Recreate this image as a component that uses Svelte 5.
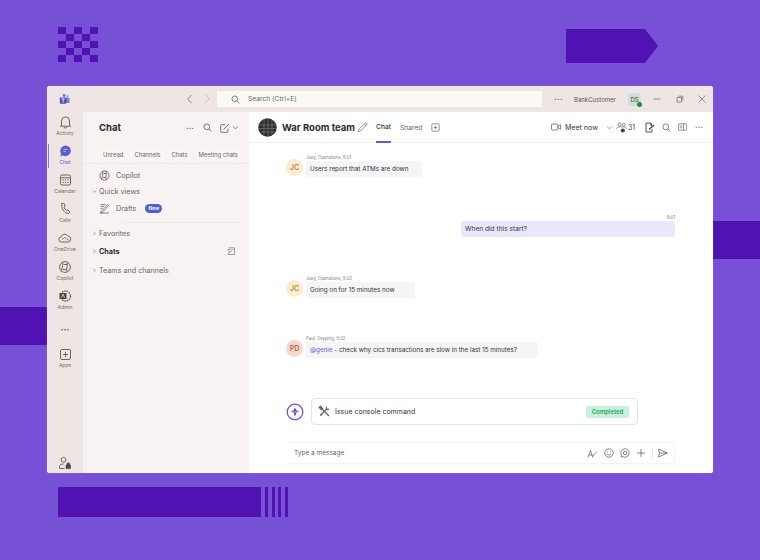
<script>
  const checker = Array.from({ length: 25 }, (_, i) => i % 2 === 0);
  const stripes = [0, 1, 2, 3];
  const filters = ['Unread', 'Channels', 'Chats', 'Meeting chats'];
</script>

<div class="page">
  <div class="checker">
    {#each checker as on}<span class:on></span>{/each}
  </div>
  <div class="arrow"></div>
  <div class="band right"></div>
  <div class="band left"></div>
  <div class="barcode">
    <div class="bar"></div>
    {#each stripes as s}<span data-s={s}></span>{/each}
  </div>

  <div class="window">
    <header class="titlebar">
      <div class="logo">
        <svg width="11" height="12" viewBox="0 0 14 14"><circle cx="6.500" cy="2.500" r="1.800" fill="#6b70cf"/><circle cx="11" cy="3.500" r="1.400" fill="#8b8fe0"/><rect x="8" y="5.500" width="5.500" height="6.500" rx="1" fill="#7b80d8"/><rect x="1" y="5" width="8.500" height="8" rx="1" fill="#4b53bc"/><path d="M3.300 7h4M5.300 7v4.500" stroke="#fff" stroke-width="1"/></svg>
      </div>
      <div class="nav">
        <svg width="8" height="10" viewBox="0 0 8 10"><path d="M5.500 1 1.800 5l3.700 4" fill="none" stroke="#8c8585" stroke-width="1"/></svg>
        <svg width="8" height="10" viewBox="0 0 8 10"><path d="M2.500 1l3.700 4-3.700 4" fill="none" stroke="#c8c0c0" stroke-width="1"/></svg>
      </div>
      <div class="searchbox">
        <svg width="9" height="9" viewBox="0 0 9 9"><circle cx="3.800" cy="3.800" r="2.800" fill="none" stroke="#666" stroke-width=".8"/><path d="M6 6l2.400 2.400" stroke="#666" stroke-width=".8"/></svg>
        <span>Search (Ctrl+E)</span>
      </div>
      <span class="tdots">···</span>
      <span class="account">BankCustomer</span>
      <div class="ds">DS<i></i></div>
      <div class="winbtns">
        <svg width="10" height="10" viewBox="0 0 10 10"><path d="M1.500 5h7" stroke="#777" stroke-width=".8"/></svg>
        <svg width="10" height="10" viewBox="0 0 10 10"><path d="M3.500 2.200h4.300v4.300M2 3.500h4.500V8H2z" fill="none" stroke="#777" stroke-width=".8"/></svg>
        <svg width="10" height="10" viewBox="0 0 10 10"><path d="M1.500 1.500l7 7M8.500 1.500l-7 7" stroke="#777" stroke-width=".8"/></svg>
      </div>
    </header>

    <div class="body">
      <nav class="rail">
        <div class="ritem">
          <svg width="13" height="14" viewBox="0 0 13 14"><path d="M2.500 10V6a4 4 0 0 1 8 0v4l1 1.200h-10zM5 12a1.600 1.600 0 0 0 3 0" fill="none" stroke="#5f5a5a" stroke-width=".9"/></svg>
          <span>Activity</span>
        </div>
        <div class="ritem active">
          <svg width="13" height="14" viewBox="0 0 13 14"><path d="M6.500 1.500a5.300 5.300 0 1 1-2.600 9.900L1.200 12.300l.9-2.700A5.300 5.300 0 0 1 6.500 1.500z" fill="#5b5fd0"/><path d="M4.500 5.500h4M4.500 7.500h2.500" stroke="#c8c9f2" stroke-width=".7"/></svg>
          <span>Chat</span>
        </div>
        <div class="ritem">
          <svg width="13" height="14" viewBox="0 0 13 14"><rect x="1.500" y="2" width="10" height="10" rx="1.400" fill="none" stroke="#5f5a5a" stroke-width=".9"/><path d="M1.500 4.800h10" stroke="#5f5a5a" stroke-width=".9"/><path d="M3.500 7h6M3.500 9.500h6" stroke="#5f5a5a" stroke-width="1.100" stroke-dasharray="1.200 1.200"/></svg>
          <span>Calendar</span>
        </div>
        <div class="ritem">
          <svg width="13" height="14" viewBox="0 0 13 14"><path d="M3 1.800 5 1.300l1.200 2.800-1.200 1.100c.4 1.300 1.300 2.500 2.500 3.300l1.400-.7 2 2.300-1.300 1.400c-4 .5-8-5.500-6.600-10.200z" fill="none" stroke="#5f5a5a" stroke-width=".9"/></svg>
          <span>Calls</span>
        </div>
        <div class="ritem">
          <svg width="14" height="14" viewBox="0 0 14 14"><path d="M3.500 11a2.500 2.500 0 0 1-.3-5 3.600 3.600 0 0 1 6.700-.9A3 3 0 0 1 10.500 11z" fill="none" stroke="#5f5a5a" stroke-width=".9"/><path d="M4 8.500l3-2 4 3" fill="none" stroke="#5f5a5a" stroke-width=".7"/></svg>
          <span>OneDrive</span>
        </div>
        <div class="ritem">
          <svg width="14" height="14" viewBox="0 0 14 14"><circle cx="7" cy="7" r="5.400" fill="none" stroke="#5f5a5a" stroke-width=".9"/><path d="M5 2.500C4 5 5 8 3 11.500M9 2.500C10 6 8 9 9 11.500M5.500 4.500h3.500M5 9.500h3.500" fill="none" stroke="#5f5a5a" stroke-width=".9"/></svg>
          <span>Copilot</span>
        </div>
        <div class="ritem">
          <svg width="14" height="14" viewBox="0 0 14 14"><circle cx="7.500" cy="7" r="5" fill="none" stroke="#5f5a5a" stroke-width="1.300" stroke-dasharray="1.600 .8"/><rect x="1.500" y="4" width="7" height="6" rx=".6" fill="#4c4848"/><path d="M3.500 8.500 5 5.200l1.500 3.300" fill="none" stroke="#fff" stroke-width=".7"/></svg>
          <span>Admin</span>
        </div>
        <div class="rmore">···</div>
        <div class="ritem apps">
          <svg width="13" height="13" viewBox="0 0 13 13"><rect x="1.500" y="1.500" width="10" height="10" rx="1.500" fill="none" stroke="#5f5a5a" stroke-width=".9"/><path d="M6.500 4v5M4 6.500h5" stroke="#5f5a5a" stroke-width=".9"/></svg>
          <span>Apps</span>
        </div>
        <div class="rfoot">
          <svg width="14" height="14" viewBox="0 0 14 14"><circle cx="5.500" cy="3.800" r="2.400" fill="none" stroke="#5f5a5a" stroke-width=".9"/><path d="M1.500 12v-1.500c0-1.500 1.500-2.500 4-2.500M1.500 12.500h5" fill="none" stroke="#5f5a5a" stroke-width=".9"/><path d="M8 9h4.500v3.600H8zM9 9V8a1.200 1.200 0 0 1 2.500 0v1" fill="#4c4848" stroke="#4c4848" stroke-width=".6"/></svg>
        </div>
      </nav>

      <aside class="panel">
        <div class="phead">
          <h2>Chat</h2>
          <span class="pdots">···</span>
          <svg width="9" height="9" viewBox="0 0 9 9"><circle cx="3.800" cy="3.800" r="2.900" fill="none" stroke="#555" stroke-width=".8"/><path d="M6 6l2.500 2.500" stroke="#555" stroke-width=".8"/></svg>
          <svg class="compose" width="10" height="10" viewBox="0 0 10 10"><path d="M8 5.500V8.500a.8.800 0 0 1-.8.800H1.500a.8.800 0 0 1-.8-.8V2.500a.8.800 0 0 1 .8-.8H5" fill="none" stroke="#555" stroke-width=".8"/><path d="M3.500 6.500 9 1" stroke="#555" stroke-width=".8"/></svg>
          <svg width="7" height="7" viewBox="0 0 7 7"><path d="M1 2.300l2.500 2.500L6 2.300" fill="none" stroke="#555" stroke-width=".7"/></svg>
        </div>
        <div class="filters">
          {#each filters as f}<span>{f}</span>{/each}
        </div>
        <div class="row item first">
          <svg width="11" height="11" viewBox="0 0 14 14"><circle cx="7" cy="7" r="5.800" fill="none" stroke="#555" stroke-width="1"/><path d="M5 2C4 5 5 8 3 12M9 2c1 4-1 7 0 10M5.500 4.500h3.500M5 9.500h3.500" fill="none" stroke="#555" stroke-width="1"/></svg>
          <span>Copilot</span>
        </div>
        <div class="row head qv">
          <svg width="5" height="5" viewBox="0 0 5 5"><path d="M.7 1.500 2.500 3.300 4.300 1.500" fill="none" stroke="#666" stroke-width=".6"/></svg>
          <span>Quick views</span>
        </div>
        <div class="row item drafts">
          <svg width="11" height="11" viewBox="0 0 11 11"><path d="M1 10h9M2 8.500 8.500 1.500l1.200 1L3.200 9.700 1.600 10z M1.500 1.500h5M1.500 3.500h3.500M1.500 5.500h1.800" fill="none" stroke="#555" stroke-width=".7"/></svg>
          <span>Drafts</span>
          <b class="new">New</b>
        </div>
        <div class="divider"></div>
        <div class="row head fav">
          <svg width="5" height="5" viewBox="0 0 5 5"><path d="M1.500.7 3.300 2.500 1.500 4.300" fill="none" stroke="#666" stroke-width=".6"/></svg>
          <span>Favorites</span>
        </div>
        <div class="row head chats">
          <svg width="5" height="5" viewBox="0 0 5 5"><path d="M1.500.7 3.300 2.500 1.500 4.300" fill="none" stroke="#666" stroke-width=".6"/></svg>
          <strong>Chats</strong>
          <svg class="pen" width="8" height="8" viewBox="0 0 8 8"><path d="M1 7.500h6.500V.8H1.500M1 7 6.500 1.800M.8 2.500h3M.8 4.200h2" fill="none" stroke="#777" stroke-width=".7"/></svg>
        </div>
        <div class="row head teams">
          <svg width="5" height="5" viewBox="0 0 5 5"><path d="M1.500.7 3.300 2.500 1.500 4.300" fill="none" stroke="#666" stroke-width=".6"/></svg>
          <span>Teams and channels</span>
        </div>
      </aside>

      <main class="main">
        <div class="chead">
          <svg class="team" width="19" height="19" viewBox="0 0 19 19"><circle cx="9.500" cy="9.500" r="9.300" fill="#2e2e30"/><path d="M1 7h17M1 10.500h17M3 14h13M6 1v17M10 1v17M14 2v15" stroke="#77777a" stroke-width=".7"/></svg>
          <h1>War Room team</h1>
          <svg class="edit" width="11" height="11" viewBox="0 0 11 11"><path d="M1.200 9.800 2 7.200 8 1.200a1 1 0 0 1 1.600 1.600L3.600 9zM7.200 2l1.700 1.700" fill="none" stroke="#666" stroke-width=".7"/></svg>
          <div class="tab on">Chat</div>
          <div class="tab">Shared</div>
          <svg class="addtab" width="9" height="9" viewBox="0 0 9 9"><rect x=".8" y=".8" width="7.400" height="7.400" rx="1.200" fill="none" stroke="#666" stroke-width=".7"/><path d="M4.500 2.800v3.400M2.800 4.500h3.400" stroke="#666" stroke-width=".7"/></svg>
          <div class="actions">
            <svg width="10" height="8" viewBox="0 0 10 8"><rect x=".5" y="1" width="6.300" height="6" rx="1" fill="none" stroke="#555" stroke-width=".7"/><path d="M6.800 3.500 9.500 1.800v4.400L6.800 4.500" fill="none" stroke="#555" stroke-width=".7"/></svg>
            <span class="meet">Meet now</span>
            <svg class="mchev" width="7" height="7" viewBox="0 0 7 7"><path d="M1 2.300l2.500 2.500L6 2.300" fill="none" stroke="#666" stroke-width=".6"/></svg>
            <div class="people">
              <svg width="11" height="11" viewBox="0 0 11 11"><circle cx="3.500" cy="2.500" r="1.700" fill="none" stroke="#666" stroke-width=".7"/><circle cx="7.800" cy="2.800" r="1.400" fill="none" stroke="#666" stroke-width=".7"/><path d="M.7 7.200c0-1.600 1-2.300 2.800-2.300h4.500c1.600 0 2.300.7 2.300 2" fill="none" stroke="#666" stroke-width=".7"/><circle cx="6.800" cy="8.500" r="2.100" fill="#444"/></svg>
              <span>31</span>
            </div>
            <svg class="notes" width="10" height="11" viewBox="0 0 10 11"><path d="M6 1H1v9h6V7" fill="none" stroke="#444" stroke-width=".9"/><path d="M6 1v2h1M4 7.500l5-4.500" fill="none" stroke="#444" stroke-width="1.300"/></svg>
            <svg class="hsearch" width="9" height="9" viewBox="0 0 9 9"><circle cx="3.800" cy="3.800" r="2.900" fill="none" stroke="#666" stroke-width=".8"/><path d="M6 6l2.500 2.500" stroke="#666" stroke-width=".8"/></svg>
            <svg width="9" height="8" viewBox="0 0 9 8"><rect x=".4" y=".8" width="8.200" height="6.400" rx=".6" fill="none" stroke="#666" stroke-width=".7"/><path d="M5.500.8v6.400M1.700 3h2.500M1.700 4.800h2.500" stroke="#666" stroke-width=".7"/></svg>
            <span class="hdots">···</span>
          </div>
        </div>

        <div class="thread">
          <div class="msg">
            <div class="avatar jc">JC</div>
            <div class="content">
              <div class="meta">Joey, Operations, 9:01</div>
              <div class="bubble b1">Users report that ATMs are down</div>
            </div>
          </div>

          <div class="msg mine">
            <div class="content">
              <div class="meta time">9:01</div>
              <div class="bubble own">When did this start?</div>
            </div>
          </div>

          <div class="msg m3">
            <div class="avatar jc">JC</div>
            <div class="content">
              <div class="meta">Joey, Operations, 9:02</div>
              <div class="bubble b3">Going on for 15 minutes now</div>
            </div>
          </div>

          <div class="msg m4">
            <div class="avatar pd">PD</div>
            <div class="content">
              <div class="meta">Paul, Dsyping, 9:02</div>
              <div class="bubble b4"><span class="at">@genie</span> - check why cics transactions are slow in the last 15 minutes?</div>
            </div>
          </div>

          <div class="agent">
            <svg class="agent-icon" width="18" height="18" viewBox="0 0 18 18"><circle cx="9" cy="9" r="7.800" fill="#fff" stroke="#7a52d8" stroke-width="1.300"/><path d="M9 4.500 10.300 7.300 13.500 8.500 10.500 9.700 9 13.500 7.500 9.700 4.500 8.500 7.700 7.300z" fill="#6a3fd0"/><path d="M5 9h8" stroke="#fff" stroke-width=".6"/></svg>
            <div class="card">
              <svg width="13" height="13" viewBox="0 0 13 13"><path d="M2 2l9 9M1.300 2.500l1.200-1.200L4.500 3.500 3.500 4.500z" stroke="#666" stroke-width="1.300" fill="none"/><path d="M11.500 3.300a2.300 2.300 0 0 1-3 1.700L2.800 11.200 1.700 10l6-5.700a2.300 2.300 0 0 1 2-3L8.700 2.700l1.200 1.300z" fill="#666"/></svg>
              <span class="cmd">Issue console command</span>
              <span class="done">Completed</span>
            </div>
          </div>
        </div>

        <div class="composer">
          <span class="ph">Type a message</span>
          <div class="ctools">
            <svg width="11" height="11" viewBox="0 0 11 11"><path d="M1 9.500 3.500 2.500 6 9.500M2 7h3M5.500 8.500 10 3.500" fill="none" stroke="#666" stroke-width=".8"/></svg>
            <svg width="10" height="10" viewBox="0 0 10 10"><circle cx="5" cy="5" r="4.200" fill="none" stroke="#666" stroke-width=".8"/><path d="M3 6c1 1.300 3 1.300 4 0" fill="none" stroke="#666" stroke-width=".7"/><path d="M3.500 3.500v.8M6.500 3.500v.8" stroke="#666" stroke-width=".8"/></svg>
            <svg width="10" height="10" viewBox="0 0 10 10"><path d="M5 .8a4.200 4.200 0 1 1-2.300 7.700L1 9l.5-1.700A4.200 4.200 0 0 1 5 .8z" fill="none" stroke="#666" stroke-width=".8"/><circle cx="5" cy="5" r="1.700" fill="none" stroke="#666" stroke-width=".8"/></svg>
            <svg width="10" height="10" viewBox="0 0 10 10"><path d="M5 1v8M1 5h8" stroke="#666" stroke-width=".8"/></svg>
            <i></i>
            <svg width="11" height="10" viewBox="0 0 11 10"><path d="M1.500 1l8.800 4-8.800 4 1-4zM2.500 5h7.800" fill="none" stroke="#666" stroke-width=".8"/></svg>
          </div>
        </div>
      </main>
    </div>
  </div>
</div>

<style>
  :global(body) { margin: 0; }
  .page {
    position: relative;
    width: 760px;
    height: 560px;
    overflow: hidden;
    background: #7651d5;
    font-family: Inter, "Liberation Sans", sans-serif;
    color: #3a3a3a;
  }
  .checker {
    position: absolute; left: 58px; top: 27px;
    display: grid;
    grid-template-columns: repeat(5, 8px);
    grid-auto-rows: 7px;
  }
  .checker .on { background: #5112b3; }
  .arrow {
    position: absolute; left: 566px; top: 29px; width: 92px; height: 34px;
    background: #5112b3;
    clip-path: polygon(0 0, 79px 0, 100% 50%, 79px 100%, 0 100%);
  }
  .band { position: absolute; background: #5112b3; height: 38px; width: 47px; }
  .band.right { left: 713px; top: 221px; }
  .band.left { left: 0; top: 307px; }
  .barcode {
    position: absolute; left: 58px; top: 487px; height: 30px;
    display: flex; gap: 3.400px; align-items: stretch;
  }
  .barcode .bar { width: 203px; background: #5112b3; margin-right: .6px; }
  .barcode span { width: 3.200px; background: #5112b3; }

  .window {
    position: absolute; left: 47px; top: 86px; width: 666px; height: 387px;
    border-radius: 3px; overflow: hidden;
    background: #fff;
    display: flex; flex-direction: column;
    box-shadow: 0 0 1px rgba(255,255,255,.5);
  }
  .titlebar {
    height: 26px; flex: none;
    background: #efe5e5;
    display: flex; align-items: center;
    font-size: 6.500px; color: #5a5656;
  }
  .logo { width: 11px; margin-left: 12px; display: flex; }
  .nav { display: flex; gap: 9px; margin-left: 116px; }
  .searchbox {
    margin-left: 6px; width: 325px; height: 16px; background: #fbf8f8;
    display: flex; align-items: center; gap: 8px; padding-left: 14px; box-sizing: border-box;
    font-size: 6.700px; color: #6d6868;
  }
  .tdots { margin-left: 12px; width: 10px; font-size: 8px; letter-spacing: .3px; font-weight: 700; }
  .account { margin-left: 10px; width: 46px; font-size: 6px; white-space: nowrap; }
  .ds {
    position: relative; margin-left: 8px; width: 13px; height: 13px; border-radius: 3px;
    background: #cfdfdc; display: flex; align-items: center; justify-content: center; font-size: 6px; color: #3e4a48;
  }
  .ds i {
    position: absolute; right: -1px; bottom: -1px; width: 5px; height: 5px; border-radius: 50%;
    background: #14942f;
  }
  .winbtns { margin-left: 11px; display: flex; gap: 12.500px; }

  .body { flex: 1; display: flex; min-height: 0; }
  .rail {
    width: 36px; flex: none; background: #efe5e5;
    display: flex; flex-direction: column; align-items: center;
    padding-top: 3px; box-sizing: border-box;
  }
  .ritem {
    position: relative; align-self: stretch; height: 29px; flex: none;
    display: flex; flex-direction: column; align-items: center;
    font-size: 5px; color: #726c6c; gap: 1px;
  }
  .ritem.active { color: #5b5fc7; }
  .ritem.active::before {
    content: ""; position: absolute; left: 1px; top: 0; width: 1px; height: 24px; background: #7d80d6;
  }
  .rmore { margin-top: 6px; height: 18px; font-size: 9px; font-weight: 700; color: #555; line-height: 12px; }
  .apps { margin-top: 6px; }
  .rfoot { margin-top: auto; padding-bottom: 3px; display: flex; }

  .panel {
    width: 166px; flex: none; background: #f8f3f2;
    display: flex; flex-direction: column;
    font-size: 7.200px; color: #6a6565;
  }
  .phead {
    height: 31px; display: flex; align-items: center; padding-left: 16px; padding-right: 10px; flex: none;
  }
  .phead h2 { margin: 0 auto 0 0; font-size: 9.500px; font-weight: 700; color: #2a2a2a; }
  .pdots { font-size: 8px; font-weight: 700; color: #555; margin-right: 9px; }
  .compose { margin-left: 8px; margin-right: 2px; }
  .filters {
    margin-top: 2px; height: 18px; padding-left: 16px;
    display: flex; align-items: center; gap: 3px; font-size: 5.900px; color: #6a6565;
    border-bottom: 1px solid #efe9e8; flex: none;
  }
  .filters span { padding: 3px 4px; background: #f9f5f5; border-radius: 7px; white-space: nowrap; }
  .row { display: flex; align-items: center; flex: none; }
  .item { padding-left: 16px; gap: 6px; height: 16px; }
  .head { padding-left: 9px; gap: 2px; height: 14px; }
  .first { margin-top: 3px; }
  .qv { margin-top: 1px; }
  .drafts { margin-top: 2px; }
  .new {
    background: #4f5fcf; color: #fff; font-size: 5px; font-weight: 600;
    border-radius: 5px; padding: 1.500px 3px; margin-left: 3px; line-height: 6px;
  }
  .divider { height: 1px; background: #efe9e8; margin: 6px 9px 0 40px; flex: none; }
  .fav { margin-top: 3px; }
  .chats { margin-top: 4px; }
  .chats strong { color: #2a2a2a; font-weight: 700; }
  .pen { margin-left: auto; margin-right: 14px; }
  .teams { margin-top: 5px; }

  .main { flex: 1; min-width: 0; display: flex; flex-direction: column; background: #fff; }
  .chead {
    height: 31px; flex: none; box-sizing: border-box; border-bottom: 1px solid #f1eeee;
    display: flex; align-items: center; padding-left: 9px;
  }
  .chead h1 { margin: 0 0 0 5px; font-size: 9.500px; font-weight: 700; color: #2a2a2a; white-space: nowrap; width: 71px; }
  .edit { margin-left: 4px; }
  .tab {
    height: 31px; box-sizing: border-box; display: flex; align-items: center;
    font-size: 6.700px; color: #6a6565; margin-left: 9px; padding-top: 1px;
  }
  .tab.on { margin-left: 8px; color: #333; font-weight: 500; border-bottom: 2px solid #5b5fc7; padding-top: 2px; width: 15px; justify-content: center; }
  .addtab { margin-left: 9px; }
  .actions { margin-left: auto; display: flex; align-items: center; padding-right: 10px; }
  .meet { margin-left: 3.500px; font-size: 7px; font-weight: 500; color: #555; width: 37px; white-space: nowrap; }
  .mchev { margin-left: 4px; }
  .people { display: flex; align-items: center; gap: 1px; margin-left: 3px; font-size: 7px; color: #444; width: 29.500px; }
  .notes { margin-right: 6.500px; }
  .hsearch { margin-right: 7px; }
  .hdots { margin-left: 8px; font-size: 8px; font-weight: 700; color: #666; }

  .thread {
    flex: 1; min-height: 0; display: flex; flex-direction: column;
    padding: 12px 38px 0 37px;
  }
  .msg { display: flex; align-items: flex-end; gap: 4px; }
  .avatar {
    width: 17px; height: 17px; border-radius: 50%; flex: none;
    display: flex; align-items: center; justify-content: center; font-size: 7px; font-weight: 500;
    margin-bottom: 1px; margin-right: -1px;
  }
  .jc { background: #fbeccb; color: #9b7a4a; }
  .pd { background: #fad6cd; color: #a0564a; }
  .content { display: flex; flex-direction: column; }
  .meta { font-size: 4.300px; line-height: 6px; color: #777; white-space: nowrap; }
  .bubble {
    height: 16px; display: flex; align-items: center; align-self: flex-start; padding: 0 4px;
    background: #f5f4f6; border-radius: 2px; font-size: 6.300px; color: #333; white-space: pre; box-sizing: border-box;
  }
  .b1 { width: 116px; }
  .b3 { width: 109px; }
  .b4 { width: 232px; }
  .at { color: #6a63c9; }
  .mine { justify-content: flex-end; margin-top: 38px; }
  .own { width: 214px; background: #e8e8fa; border-radius: 3px; font-size: 6.600px; }
  .time { text-align: right; }
  .m3 { margin-top: 39px; }
  .m4 { margin-top: 38px; }
  .agent { display: flex; align-items: center; margin-top: 40px; gap: 7px; }
  .agent-icon { flex: none; }
  .card {
    width: 327px; height: 27px; box-sizing: border-box; border: 1px solid #e4e4e6; border-radius: 4px;
    display: flex; align-items: center; padding: 0 8px 0 6px; gap: 4px;
  }
  .cmd { font-size: 7px; color: #333; margin-right: auto; }
  .done {
    background: #c9f0dc; color: #14ad5c; font-size: 6px; font-weight: 600;
    width: 43px; height: 12px; border-radius: 2px;
    display: flex; align-items: center; justify-content: center;
  }
  .composer {
    flex: none; height: 22px; margin: 0 38px 9px 38px; box-sizing: border-box;
    border: 1px solid #f4f3f3; border-left: 0; border-radius: 2px;
    display: flex; align-items: center; padding: 0 6px 0 7px;
  }
  .ph { font-size: 6.500px; color: #666; margin-right: auto; }
  .ctools { display: flex; align-items: center; gap: 6px; }
  .ctools i { width: 1px; height: 11px; background: #e8e6e6; margin-right: -1.500px; }
</style>
